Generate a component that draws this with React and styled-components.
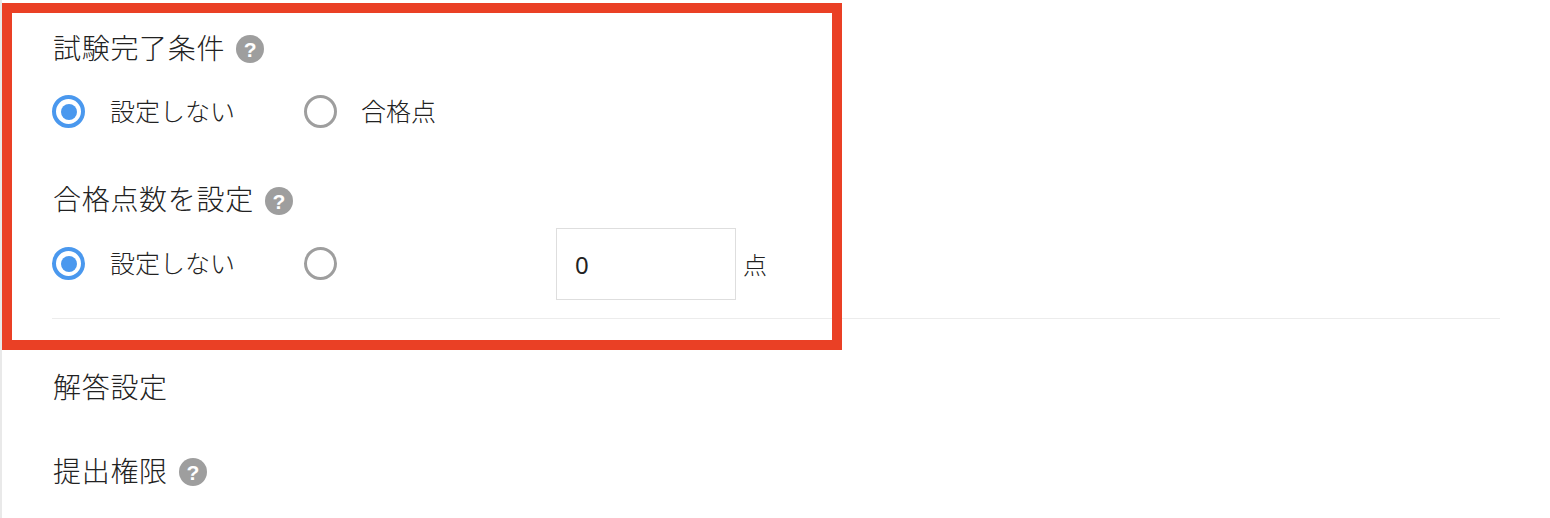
import React from "react";
import styled, { createGlobalStyle } from "styled-components";

const Global = createGlobalStyle`
  html, body { margin: 0; padding: 0; background: #fff; }
  body { font-family: "Noto Sans CJK JP", "Noto Sans", sans-serif; color: #222; }
`;

const Page = styled.div`
  position: relative;
  width: 1550px;
  height: 518px;
  overflow: hidden;
  box-sizing: border-box;
  border-left: 2px solid #e9e9e9;
  padding: 28px 50px 0 51px;
`;

const Highlight = styled.div`
  position: absolute;
  left: 0;
  top: 3px;
  width: 840px;
  height: 347px;
  box-sizing: border-box;
  border: 10px solid #ea4025;
  pointer-events: none;
`;

const Heading = styled.div`
  display: flex;
  align-items: center;
  height: 42px;
  margin-top: ${(p) => p.$top || 0}px;
  font-size: 28px;
  letter-spacing: 0.7px;
  line-height: 42px;
  font-weight: 300;
  white-space: nowrap;
`;

const HeadingText = styled.span`
  margin-bottom: ${(p) => p.$lift || 4}px;
`;

const HelpBadge = styled.span`
  display: inline-flex;
  align-items: center;
  justify-content: center;
  width: 28px;
  height: 28px;
  margin-left: 11px;
  border-radius: 50%;
  background: #9e9e9e;
  color: #fff;
  font-family: "Liberation Sans", sans-serif;
  font-size: 21px;
  font-weight: 700;
  letter-spacing: 0;
  line-height: 1;
`;

const RadioRow = styled.div`
  display: flex;
  align-items: ${(p) => p.$align || "center"};
  height: ${(p) => p.$height}px;
  margin-top: ${(p) => p.$top || 0}px;
`;

const Radio = styled.span`
  flex: none;
  box-sizing: border-box;
  width: 33px;
  height: 33px;
  border-radius: 50%;
  border: ${(p) => (p.$on ? "4px solid #4a98ee" : "3px solid #9e9e9e")};
  display: flex;
  align-items: center;
  justify-content: center;
  &::after {
    content: "";
    display: ${(p) => (p.$on ? "block" : "none")};
    width: 16px;
    height: 16px;
    border-radius: 50%;
    background: #4a98ee;
  }
`;

const Option = styled.label`
  display: flex;
  align-items: center;
  width: 252px;
  height: 33px;
  margin: ${(p) => p.$top || 0}px 1px 0 -1px;
`;

const OptionText = styled.span`
  margin-left: ${(p) => p.$gap || 25}px;
  margin-bottom: 4px;
  font-size: 25px;
  letter-spacing: 0;
  font-weight: 300;
  white-space: nowrap;
`;

const ScoreInput = styled.input`
  box-sizing: border-box;
  width: 180px;
  height: 72px;
  padding: 0 18px;
  border: 1px solid #dedede;
  background: #fff;
  color: #222;
  font-family: "Noto Sans", sans-serif;
  font-size: 24px;
  outline: none;
`;

const ScoreGroup = styled.div`
  display: flex;
  align-items: center;
  margin-left: -1px;
  height: 72px;
`;

const Unit = styled.span`
  margin-left: 7px;
  margin-bottom: 2px;
  font-size: 24px;
  font-weight: 300;
`;

const Divider = styled.hr`
  margin: 18px 0 0 -1px;
  border: 0;
  border-top: 1px solid #ececec;
`;

const Help = () => <HelpBadge>?</HelpBadge>;

export default function App() {
  return (
    <>
      <Global />
      <Page>
        <Heading><HeadingText>試験完了条件</HeadingText><Help /></Heading>
        <RadioRow $height={33} $top={25}>
          <Option><Radio $on /><OptionText>設定しない</OptionText></Option>
          <Option><Radio /><OptionText $gap={24}>合格点</OptionText></Option>
        </RadioRow>
        <Heading $top={52}><HeadingText $lift={7}>合格点数を設定</HeadingText><Help /></Heading>
        <RadioRow $height={72} $top={6} $align="flex-start">
          <Option $top={19}><Radio $on /><OptionText>設定しない</OptionText></Option>
          <Option $top={19}><Radio /></Option>
          <ScoreGroup>
            <ScoreInput defaultValue="0" />
            <Unit>点</Unit>
          </ScoreGroup>
        </RadioRow>
        <Divider />
        <Heading $top={49}><HeadingText $lift={6}>解答設定</HeadingText></Heading>
        <Heading $top={41}><HeadingText>提出権限</HeadingText><Help /></Heading>
        <Highlight />
      </Page>
    </>
  );
}
